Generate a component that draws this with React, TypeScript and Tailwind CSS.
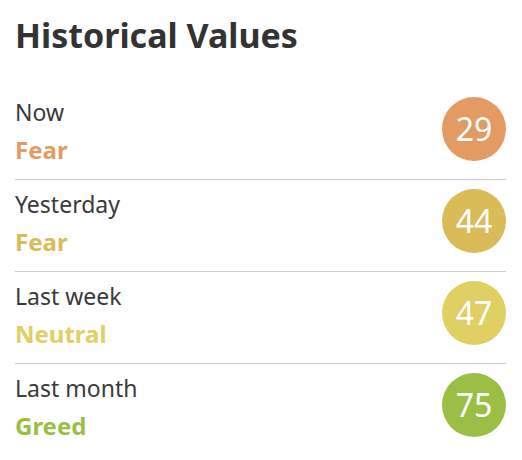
import React from "react";

const rows = [
  { label: "Now", status: "Fear", value: 29, color: "#e39a63" },
  { label: "Yesterday", status: "Fear", value: 44, color: "#d9bb58" },
  { label: "Last week", status: "Neutral", value: 47, color: "#e0cf62" },
  { label: "Last month", status: "Greed", value: 75, color: "#9bbf45" },
];

export default function App() {
  return (
    <div
      className="w-[522px] h-[460px] bg-white px-[15px] pt-[12px]"
      style={{ fontFamily: '"Noto Sans", sans-serif' }}
    >
      <h2 className="text-[34px] leading-[46px] font-bold text-[#333333] mb-[30px]">
        Historical Values
      </h2>
      <div className="flex flex-col pr-[1px]">
        {rows.map((r, i) => (
          <div
            key={r.label}
            className={`flex justify-between items-start pt-[5px] pb-[10px] ${
              i < rows.length - 1 ? "border-b border-[#cccccc]" : ""
            }`}
          >
            <div className="flex flex-col">
              <span className="text-[23px] leading-[38px] text-[#3a3a3a]">{r.label}</span>
              <span
                className="text-[24px] leading-[38px] font-bold"
                style={{ color: r.color }}
              >
                {r.status}
              </span>
            </div>
            <div
              className="mt-[4px] w-[64px] h-[64px] rounded-full flex items-center justify-center text-white text-[32px]"
              style={{ backgroundColor: r.color }}
            >
              {r.value}
            </div>
          </div>
        ))}
      </div>
    </div>
  );
}
